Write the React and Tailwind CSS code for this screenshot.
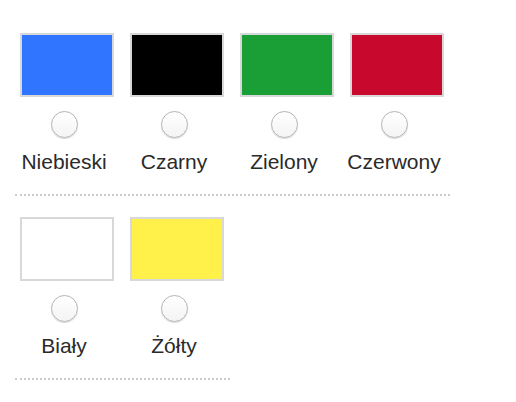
import React from 'react';

const rows = [
  [
    { name: 'Niebieski', color: 'bg-[#2f75ff]' },
    { name: 'Czarny', color: 'bg-[#000000]' },
    { name: 'Zielony', color: 'bg-[#1a9f37]' },
    { name: 'Czerwony', color: 'bg-[#c8092d]' },
  ],
  [
    { name: 'Biały', color: 'bg-[#ffffff]' },
    { name: 'Żółty', color: 'bg-[#fff04a]' },
  ],
];

function Swatch({ name, color }) {
  return (
    <label className="flex w-[94px] flex-col">
      <div className={`h-[64px] w-[94px] border-2 border-[#d8d8d8] ${color}`}></div>
      <div className="flex w-[88px] flex-col items-center">
        <span className="mt-[14px] block h-[27px] w-[27px] rounded-full border border-[#b4b4b4] bg-[linear-gradient(#ffffff,#f4f4f4)] shadow-[0_1px_1px_rgba(0,0,0,0.15)]"></span>
        <span className="mt-[12px] whitespace-nowrap text-[21px] leading-[24px] text-[#2a2a2a]">{name}</span>
      </div>
    </label>
  );
}

export default function App() {
  return (
    <div
      className="min-h-screen bg-white pl-[15px] pt-[33px]"
      style={{ fontFamily: '"Liberation Sans", Arial, sans-serif' }}
    >
      {rows.map((row, i) => (
        <div
          key={i}
          className={`mb-[21px] flex gap-[16px] border-b-2 border-dotted border-[#cccccc] pb-[20px] pl-[5px] ${
            i === 0 ? 'w-[435px]' : 'w-[215px]'
          }`}
        >
          {row.map((s) => (
            <Swatch key={s.name} {...s} />
          ))}
        </div>
      ))}
    </div>
  );
}
